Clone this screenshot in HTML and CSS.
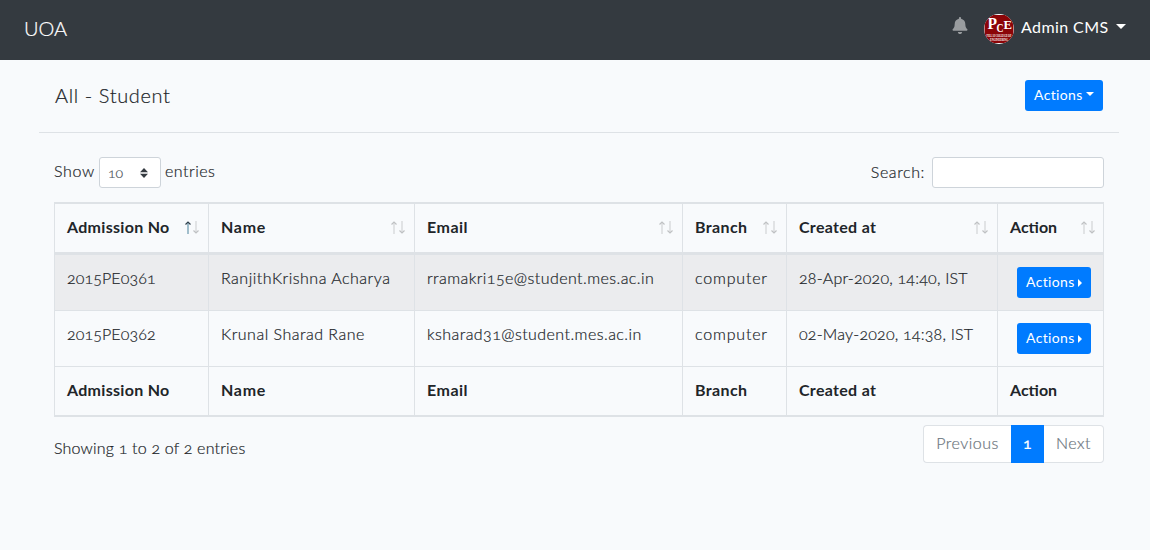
FILE: index.html
```html
<!DOCTYPE html>
<html lang="en">
<head>
<meta charset="utf-8">
<title>UOA - All Students</title>
<link rel="stylesheet" href="styles.css">
</head>
<body>
<header class="navbar">
  <a class="brand">UOA</a>
  <div class="nav-right">
    <svg class="bell" viewBox="0 0 448 512"><path fill="currentColor" d="M224 512c35.320 0 63.970-28.650 63.970-64H160.030c0 35.350 28.650 64 63.970 64zm215.390-149.710c-19.320-20.760-55.470-51.990-55.470-154.290 0-77.700-54.480-139.900-127.940-155.160V32c0-17.670-14.320-32-31.980-32s-31.980 14.330-31.980 32v20.840C118.560 68.100 64.080 130.300 64.080 208c0 102.300-36.150 133.530-55.470 154.290-6 6.450-8.660 14.160-8.610 21.710.11 16.400 12.980 32 32.100 32h383.800c19.120 0 32-15.600 32.100-32 .05-7.550-2.610-15.270-8.610-21.710z"/></svg>
    <svg class="avatar" viewBox="0 0 30 30">
      <defs><clipPath id="disc"><circle cx="15" cy="15" r="15"/></clipPath></defs>
      <g clip-path="url(#disc)">
        <rect width="30" height="30" fill="#fff"/><rect x=".5" y="1" width="29" height="28" fill="#8b0508"/>
        <g fill="#fff" font-family="Liberation Serif, serif" font-weight="700">
          <text x="3.500" y="14.500" font-size="17" textLength="9.500" lengthAdjust="spacingAndGlyphs">P</text>
          <text x="12.500" y="18" font-size="13" textLength="7" lengthAdjust="spacingAndGlyphs">C</text>
          <text x="19.500" y="14.500" font-size="13.500" textLength="8.500" lengthAdjust="spacingAndGlyphs">E</text>
          <text x="2.500" y="22.800" font-size="3.600" textLength="25" lengthAdjust="spacingAndGlyphs">PILLAI COLLEGE OF</text>
          <text x="6" y="26.800" font-size="3.600" textLength="18" lengthAdjust="spacingAndGlyphs">ENGINEERING</text>
        </g>
      </g>
    </svg>
    <span class="user">Admin CMS</span><i class="caret nav-caret"></i>
  </div>
</header>
<main class="page">
  <div class="title-bar"><h1 class="title">All - Student</h1><button class="btn btn-top">Actions<i class="caret"></i></button></div>
  <section class="content">
    <div class="tools">
      <label class="length"><span class="show">Show</span><span class="select">10<svg class="updown" viewBox="0 0 8 10"><path d="M4 0 8 4.300H0zM0 5.700h8L4 10z"/></svg></span><span class="entries">entries</span></label>
      <label class="search"><span class="search-label">Search:</span><input class="search-input" type="text"></label>
    </div>
    <table class="grid">
      <colgroup><col class="c1"><col class="c2"><col class="c3"><col class="c4"><col class="c5"><col class="c6"></colgroup>
      <thead><tr>
        <th class="h-adm"><div class="th">Admission No<svg class="sort" viewBox="0 0 14 13"><path class="stem on" d="M3 1v12"/><path class="head on" d="M0.500 3.500 3 1 5.500 3.500"/><path class="stem" d="M11 0v12"/><path class="head" d="M8.500 9.500 11 12 13.500 9.500"/></svg></div></th>
        <th class="h-name"><div class="th">Name<svg class="sort" viewBox="0 0 14 13"><path class="stem" d="M3 1v12M11 0v12"/><path class="head" d="M0.500 3.500 3 1 5.500 3.500M8.500 9.500 11 12 13.500 9.500"/></svg></div></th>
        <th class="h-email"><div class="th">Email<svg class="sort" viewBox="0 0 14 13"><path class="stem" d="M3 1v12M11 0v12"/><path class="head" d="M0.500 3.500 3 1 5.500 3.500M8.500 9.500 11 12 13.500 9.500"/></svg></div></th>
        <th class="h-branch"><div class="th">Branch<svg class="sort" viewBox="0 0 14 13"><path class="stem" d="M3 1v12M11 0v12"/><path class="head" d="M0.500 3.500 3 1 5.500 3.500M8.500 9.500 11 12 13.500 9.500"/></svg></div></th>
        <th class="h-created"><div class="th">Created at<svg class="sort" viewBox="0 0 14 13"><path class="stem" d="M3 1v12M11 0v12"/><path class="head" d="M0.500 3.500 3 1 5.500 3.500M8.500 9.500 11 12 13.500 9.500"/></svg></div></th>
        <th><div class="th">Action<svg class="sort" viewBox="0 0 14 13"><path class="stem" d="M3 1v12M11 0v12"/><path class="head" d="M0.500 3.500 3 1 5.500 3.500M8.500 9.500 11 12 13.500 9.500"/></svg></div></th>
      </tr></thead>
      <tbody>
        <tr><td class="number">2015PE0361</td><td class="name">RanjithKrishna Acharya</td><td class="email">rramakri15e@student.mes.ac.in</td><td class="branch">computer</td><td class="date">28-Apr-2020, 14:40, IST</td><td class="act"><button class="btn btn-row">Actions<i class="caret-r"></i></button></td></tr>
        <tr><td class="number">2015PE0362</td><td class="name">Krunal Sharad Rane</td><td class="email">ksharad31@student.mes.ac.in</td><td class="branch">computer</td><td class="date">02-May-2020, 14:38, IST</td><td class="act"><button class="btn btn-row">Actions<i class="caret-r"></i></button></td></tr>
      </tbody>
      <tfoot><tr><th class="h-adm">Admission No</th><th class="h-name">Name</th><th class="h-email">Email</th><th class="h-branch">Branch</th><th class="h-created">Created at</th><th>Action</th></tr></tfoot>
    </table>
    <div class="bottom"><span class="info">Showing 1 to 2 of 2 entries</span>
      <nav class="pages"><a class="pg prev">Previous</a><a class="pg active">1</a><a class="pg next">Next</a></nav></div>
  </section>
</main>
</body>
</html>
```
FILE: styles.css
```css
* { box-sizing: border-box; }
body { margin: 0; background: #f8fafc; color: #212529; font: 300 16px/24px Lato, "Open Sans", sans-serif; font-variant-numeric: oldstyle-nums; -webkit-text-stroke: 0.2px; }
.navbar { height: 60px; background: #343a40; color: #fff; display: flex; align-items: center; justify-content: space-between; padding: 0 24px; }
.brand { font-size: 20px; padding-bottom: 5px; }
.nav-right { display: flex; align-items: center; padding-bottom: 2px; }
.bell { width: 16px; height: 17px; color: #999c9f; margin: 0 16px 7px 0; }
.avatar { width: 30px; height: 30px; margin-right: 7px; -webkit-text-stroke: 0; }
.user { font-weight: 400; padding-bottom: 4px; width: 88px; white-space: nowrap; letter-spacing: 0.4px; -webkit-text-stroke: 0; }
.caret { border: solid transparent; border-width: 4.200px 4.200px 0; border-top-color: #fff; margin: 0 0 1px 3px; }
.nav-caret { border-width: 5px 5px 0; margin: 0 0 5px 7px; }
.page { padding: 0 31px 0 39px; }
.title-bar { height: 73px; display: flex; justify-content: space-between; padding: 20px 16px 0; border-bottom: 1px solid #dee2e6; }
.title { margin: 0; font-size: 20px; line-height: 31px; font-weight: 300; letter-spacing: 0.620px; }
.btn { height: 31px; border: 0; border-radius: 3px; background: #007bff; color: #fff; font: 400 14px/21px Lato, sans-serif; letter-spacing: 0.350px; display: flex; align-items: center; padding: 0 9px 2px; white-space: nowrap; -webkit-text-stroke: 0; }
.btn-top { width: 78px; }
.btn-row { width: 74px; margin-left: auto; }
.caret-r { border: solid transparent; border-width: 4px 0 4px 4px; border-left-color: #fff; margin: 2px 0 0 3px; }
.content { padding: 24px 15px 0; }
.tools { display: flex; justify-content: space-between; height: 45px; }
.length, .search { display: flex; height: 31px; align-items: center; }
.show { width: 41px; letter-spacing: 0.650px; padding-bottom: 3px; }
.entries { letter-spacing: 0.5px; padding-bottom: 3px; }
.search-label { letter-spacing: 0.6px; padding-bottom: 1px; }
.select { width: 62px; height: 31px; margin: 0 4px; border: 1px solid #ced4da; border-radius: 3px; background: #fff; font-size: 14px; color: #495057; display: flex; align-items: center; justify-content: space-between; padding: 0 12px 0 8px; }
.updown { width: 8px; height: 10px; fill: #343a40; }
.search-input { width: 172px; height: 31px; margin: 0 0 0 7px; border: 1px solid #ced4da; border-radius: 3px; background: #fff; }
.grid { width: 1050px; table-layout: fixed; border-collapse: separate; border-spacing: 0; }
.c1 { width: 154px; } .c2 { width: 206px; } .c3 { width: 268px; } .c4 { width: 104px; } .c5 { width: 211px; } .c6 { width: 107px; }
.grid th, .grid td { text-align: left; vertical-align: top; padding: 11px 0 0 12px; border-left: 1px solid #dee2e6; white-space: nowrap; }
.grid th:last-child, .grid td:last-child { border-right: 1px solid #dee2e6; }
.grid th { font-weight: 700; -webkit-text-stroke: 0; }
.grid thead th { height: 53px; border-top: 2px solid #dee2e6; border-bottom: 3px solid #dee2e6; }
.grid tbody td { height: 56px; border-bottom: 1px solid #dee2e6; }
.grid tbody tr:first-child td { background: #ebecee; }
.grid td.act { padding: 12px 12px 0; }
.grid tfoot th { height: 50px; border-bottom: 2px solid #dee2e6; }
.h-adm { letter-spacing: 0.3px; }
.h-name { letter-spacing: 0.7px; }
.h-email { letter-spacing: 0.5px; }
.h-branch { letter-spacing: 0.4px; }
.h-created { letter-spacing: 0.3px; }
.number { letter-spacing: 0.1px; }
.name { letter-spacing: 0.5px; }
.email { letter-spacing: 0.440px; }
.branch { letter-spacing: 0.820px; }
.date { letter-spacing: 0.2px; }
.th { display: flex; justify-content: space-between; padding-right: 9px; }
.grid th:last-child .th { padding-right: 8px; }
.sort { width: 14px; height: 13px; margin-top: 6px; fill: none; }
.stem { stroke: #e1e3e5; stroke-width: 2; }
.head { stroke: #bfc1c3; stroke-width: 1.2; }
.stem.on { stroke: #85aabd; stroke-width: 1.5; }
.head.on { stroke: #30404c; }
.bottom { display: flex; justify-content: space-between; padding-top: 8px; }
.info { padding-top: 11px; letter-spacing: 0.2px; }
.pages { display: flex; height: 38px; }
.pg { border: 1px solid #dee2e6; background: #fff; color: #6c757d; display: flex; align-items: center; justify-content: center; padding-bottom: 2px; letter-spacing: 0.5px; }
.prev { width: 88px; border-right: 0; border-radius: 4px 0 0 4px; }
.active { width: 33px; background: #007bff; border-color: #007bff; color: #fff; font-weight: 400; }
.next { width: 60px; border-left: 0; border-radius: 0 4px 4px 0; }
```
